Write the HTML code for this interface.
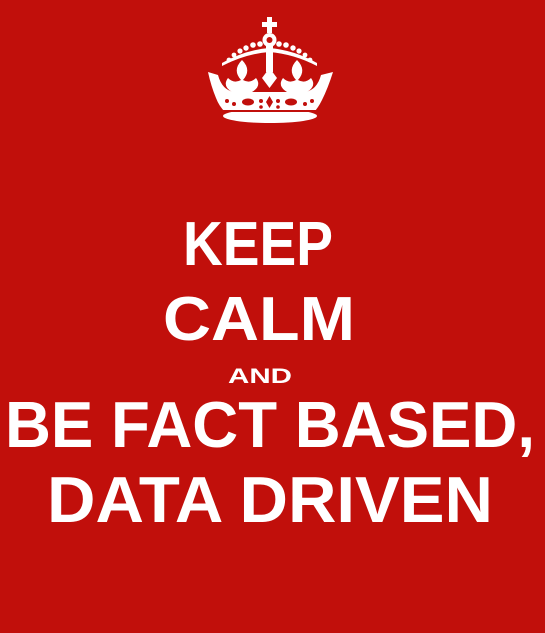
<!DOCTYPE html>
<html><head><meta charset="utf-8"><style>
html,body{margin:0;padding:0;background:#c10f0b;}
svg{display:block}
text{font-family:"Liberation Sans",Arial,sans-serif;fill:#fff;font-weight:bold}
</style></head><body>
<svg width="545" height="633" viewBox="0 0 545 633" xmlns="http://www.w3.org/2000/svg">
<rect width="545" height="633" fill="#c10f0b"/>
<g fill="#fff">
  <rect x="267" y="17" width="5" height="16"/>
  <rect x="262" y="22" width="15" height="5"/>
  <circle cx="269.5" cy="40" r="7"/>
  <circle cx="229" cy="60" r="2.4"/><circle cx="234" cy="55" r="2.4"/><circle cx="240" cy="51" r="2.6"/>
  <circle cx="246" cy="48" r="2.7"/><circle cx="253" cy="45" r="2.8"/><circle cx="260" cy="44" r="2.8"/>
  <circle cx="279" cy="44" r="2.8"/><circle cx="286" cy="45" r="2.8"/><circle cx="293" cy="48" r="2.7"/>
  <circle cx="299" cy="51" r="2.6"/><circle cx="305" cy="55" r="2.4"/><circle cx="310" cy="60" r="2.4"/>
  <rect x="266" y="46" width="7" height="26"/>
  <path d="M222 63 Q245 50 269 48 Q294 50 317 63 L317 66 Q294 54 269 52 Q245 54 222 66Z"/>
  <path d="M242 60 Q232 70 241 80 Q234 84 228 78 Q222 86 232 92 L252 92 Q262 86 256 78 Q250 84 243 80 Q252 70 242 60Z"/>
  <path d="M297 60 Q287 70 296 80 Q289 84 283 78 Q277 86 287 92 L307 92 Q317 86 311 78 Q305 84 298 80 Q307 70 297 60Z"/>
  <path d="M269.5 68 L277 78 L269.5 88 L262 78Z"/>
  <path d="M208 72 L218 75 Q222 90 234 92 L305 92 Q317 90 321 75 L333 72 Q328 88 322 100 Q318 108 314 112 L225 112 Q219 106 216 98 Q211 86 208 72Z"/>
  <ellipse cx="270" cy="116" rx="47" ry="7"/>
</g>
<g fill="#c10f0b">
  <circle cx="227" cy="101" r="2"/><circle cx="234" cy="104" r="2"/>
  <ellipse cx="248" cy="102" rx="6" ry="3.5"/>
  <circle cx="261" cy="101" r="2"/><circle cx="261" cy="107" r="1.8"/>
  <path d="M269.5 96 L273 102 L269.5 108 L266 102Z"/>
  <circle cx="278" cy="101" r="2"/><circle cx="278" cy="107" r="1.8"/>
  <ellipse cx="291" cy="102" rx="6" ry="3.5"/>
  <circle cx="305" cy="104" r="2"/><circle cx="312" cy="101" r="2"/>
  <circle cx="269.5" cy="40" r="3"/>
  <path d="M222 112 L317 112 L317 110 L222 110Z"/>
</g>
<text x="183" y="265" font-size="62" textLength="150" lengthAdjust="spacingAndGlyphs">KEEP</text>
<text x="163" y="340" font-size="62" textLength="192" lengthAdjust="spacingAndGlyphs">CALM</text>
<text x="228" y="383" font-size="21" textLength="64" lengthAdjust="spacingAndGlyphs">AND</text>
<text x="5" y="447" font-size="65" textLength="530" lengthAdjust="spacingAndGlyphs">BE FACT BASED,</text>
<text x="47" y="522" font-size="65" textLength="446" lengthAdjust="spacingAndGlyphs">DATA DRIVEN</text>
</svg>
</body></html>
